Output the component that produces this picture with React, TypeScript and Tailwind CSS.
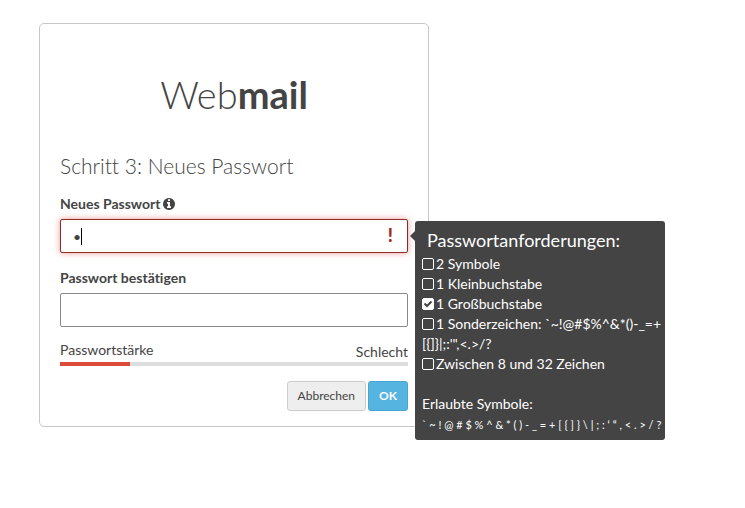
import { useState } from 'react';

type Rule = { id: string; text: string; continuation?: string; met: boolean };

const rules: Rule[] = [
  { id: 'symbols', text: '2 Symbole', met: false },
  { id: 'lower', text: '1 Kleinbuchstabe', met: false },
  { id: 'upper', text: '1 Großbuchstabe', met: true },
  {
    id: 'special',
    text: '1 Sonderzeichen: `~!@#$%^&*()-_=+',
    continuation: '[{]}|;:\'",<.>/?',
    met: false,
  },
  { id: 'length', text: 'Zwischen 8 und 32 Zeichen', met: false },
];

function InfoIcon() {
  return (
    <svg viewBox="0 0 1536 1536" className="size-3 fill-current" aria-hidden="true">
      <path d="M1024 1248v-160q0-14-9-23t-23-9h-96V544q0-14-9-23t-23-9H544q-14 0-23 9t-9 23v160q0 14 9 23t23 9h96v320h-96q-14 0-23 9t-9 23v160q0 14 9 23t23 9h448q14 0 23-9t9-23zM896 352V192q0-14-9-23t-23-9H672q-14 0-23 9t-9 23v160q0 14 9 23t23 9h192q14 0 23-9t9-23zm640 416q0 209-103 385.500T1153.500 1433 768 1536t-385.500-103T103 1153.500 0 768t103-385.500T382.500 103 768 0t385.500 103T1433 382.500 1536 768z" />
    </svg>
  );
}

function RuleItem({ rule }: { rule: Rule }) {
  return (
    <li className="whitespace-nowrap">
      <span className="mr-0.5 inline-grid size-3 align-[-1px]">
        <input
          id={rule.id}
          type="checkbox"
          checked={rule.met}
          readOnly
          className="peer col-start-1 row-start-1 size-3 appearance-none rounded-xs border border-white checked:bg-white"
        />
        <svg
          viewBox="0 0 12 12"
          className="pointer-events-none invisible col-start-1 row-start-1 size-3 fill-none stroke-[#444444] stroke-2 peer-checked:visible"
          aria-hidden="true"
        >
          <path d="M2.500 5.500 5 8 9.500 3.500" />
        </svg>
      </span>
      <label htmlFor={rule.id}>
        {rule.text}
        {rule.continuation && (
          <>
            <br />
            {rule.continuation}
          </>
        )}
      </label>
    </li>
  );
}

function Requirements() {
  return (
    <aside
      role="tooltip"
      className="absolute top-0.5 left-full z-10 ml-[7px] w-[250px] rounded-[3px] bg-[#444444] px-[7px] pt-2 pb-[5px] text-sm leading-5 text-white"
    >
      <span className="absolute top-[10px] -left-[5px] border-y-5 border-r-5 border-y-transparent border-r-[#444444]" />
      <h2 className="px-[5px] text-lg leading-[22px]">Passwortanforderungen:</h2>
      <ul className="mt-[3px]">
        {rules.map((rule) => (
          <RuleItem key={rule.id} rule={rule} />
        ))}
      </ul>
      <p className="mt-5">Erlaubte Symbole:</p>
      <p className="text-[11px] leading-[21px] whitespace-nowrap">{'` ~ ! @ # $ % ^ & * ( ) - _ = + [ { ] } \\ | ; : ‘ “ , < . > / ?'}</p>
    </aside>
  );
}

export default function App() {
  const [password, setPassword] = useState('a');
  const [confirmation, setConfirmation] = useState('');

  return (
    <main className="px-[39px] py-[23px] font-['Lato',sans-serif] text-sm leading-5 text-[#444444] [font-variant-ligatures:none]">
      <form className="w-full max-w-[390px] rounded-[5px] border border-[#c8c8c8] bg-white px-5 pt-[46px] pb-[15px]">
        <h1 className="text-center text-[38px] leading-12 font-light">
          Web<b className="font-bold">mail</b>
        </h1>
        <h2 className="mt-9 text-[21px] leading-6 font-light">Schritt 3: Neues Passwort</h2>

        <div className="mt-4 flex items-center gap-[3px]">
          <label htmlFor="password" className="font-bold">Neues Passwort</label>
          <InfoIcon />
        </div>
        <div className="relative mt-[5px]">
          <input
            id="password"
            type="password"
            value={password}
            onChange={(e) => setPassword(e.target.value)}
            aria-invalid="true"
            className="block h-[34px] w-full rounded-xs border border-[#8b2b2b] px-3 shadow-[0_0_6px_rgba(217,83,79,0.6)] outline-none"
          />
          <span className="absolute top-[9px] left-[21px] h-[17px] w-px bg-black" />
          <span className="absolute top-1.5 right-[15px] text-lg leading-5 font-black text-[#a52a20]">!</span>
          <Requirements />
        </div>

        <label htmlFor="confirmation" className="mt-[15px] block font-bold">Passwort bestätigen</label>
        <input
          id="confirmation"
          type="password"
          value={confirmation}
          onChange={(e) => setConfirmation(e.target.value)}
          className="mt-[5px] block h-[34px] w-full rounded-xs border border-[#888888] px-3 outline-none"
        />

        <div className="mt-[13px] flex items-center justify-between">
          <span>Passwortstärke</span>
          <span className="pt-0.5 -mb-0.5">Schlecht</span>
        </div>
        <div className="mt-[2px] h-1 bg-[#dddddd]">
          <div className="h-full w-1/5 bg-[#dd4b39]" />
        </div>

        <div className="mt-[15px] flex justify-end gap-0.5">
          <button type="button" className="h-[30px] rounded-[3px] border border-[#cccccc] bg-[#eeeeee] px-[10px] text-xs">
            Abbrechen
          </button>
          <button type="submit" className="h-[30px] rounded-[3px] border border-[#46a5d3] bg-[#56b4e0] px-[10px] text-xs font-bold text-white">
            OK
          </button>
        </div>
      </form>
    </main>
  );
}
